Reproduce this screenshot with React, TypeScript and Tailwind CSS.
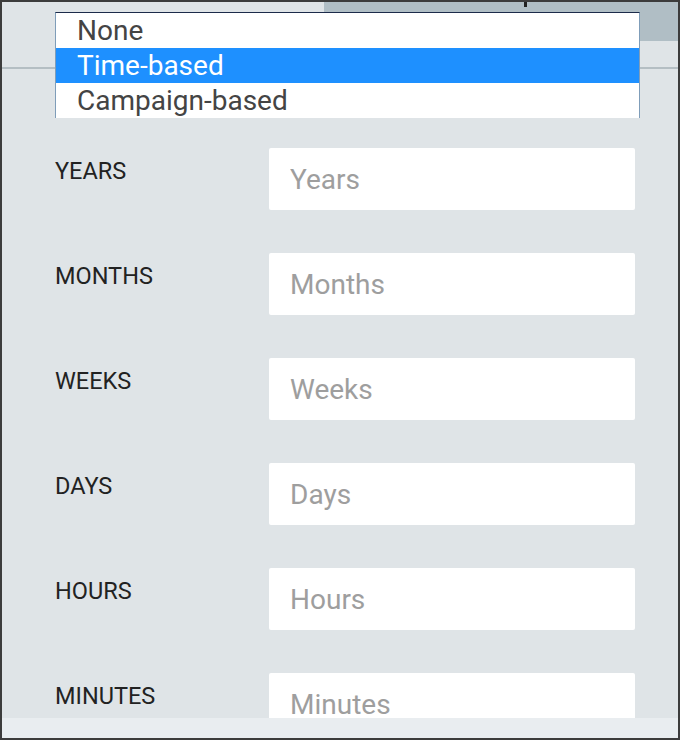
import React from "react";

const fields = ["Years", "Months", "Weeks", "Days", "Hours", "Minutes"];

export default function App() {
  return (
    <div
      className="relative flex h-[740px] w-[680px] flex-col overflow-hidden border-2 border-[#3c3c3c] bg-[#dfe4e7]"
      style={{ fontFamily: "Roboto, 'Liberation Sans', sans-serif" }}
    >
      <div className="flex h-[39px] flex-none">
        <div className="w-[322px] flex-none" />
        <div className="relative flex-1 bg-[#b0bec5]">
          <div className="absolute left-[200px] top-0 h-[5px] w-[3px] bg-[#222]" />
        </div>
      </div>
      <div className="h-[26px] flex-none" />
      <div className="h-[2px] flex-none bg-[#b4bec3]" />
      <div className="flex flex-1 flex-col gap-[43px] overflow-hidden pl-[53px] pt-[79px]">
        {fields.map((f) => (
          <div key={f} className="flex flex-none items-start">
            <div className="mt-[10px] w-[214px] flex-none text-[23.5px] leading-[27px] text-[#222]">
              {f.toUpperCase()}
            </div>
            <input
              placeholder={f}
              className="h-[62px] w-[366px] flex-none rounded-[2px] bg-white pl-[21px] text-[28px] text-[#333] outline-none placeholder:text-[#9e9e9e]"
              style={{ fontFamily: "Roboto, 'Liberation Sans', sans-serif" }}
            />
          </div>
        ))}
      </div>
      <div className="h-[20px] flex-none bg-[#e9edf0]" />

      <div className="absolute left-[53px] top-[10px] h-[106px] w-[585px] overflow-hidden border-x border-t border-x-[#7f9db9] border-t-[#1c2b4a] bg-white text-[28px] leading-[35px] text-[#444]">
        <div className="h-[35px] pl-[21px]">None</div>
        <div className="h-[35px] bg-[#1e90ff] pl-[21px] text-white">Time-based</div>
        <div className="h-[35px] pl-[21px]">Campaign-based</div>
      </div>
    </div>
  );
}
